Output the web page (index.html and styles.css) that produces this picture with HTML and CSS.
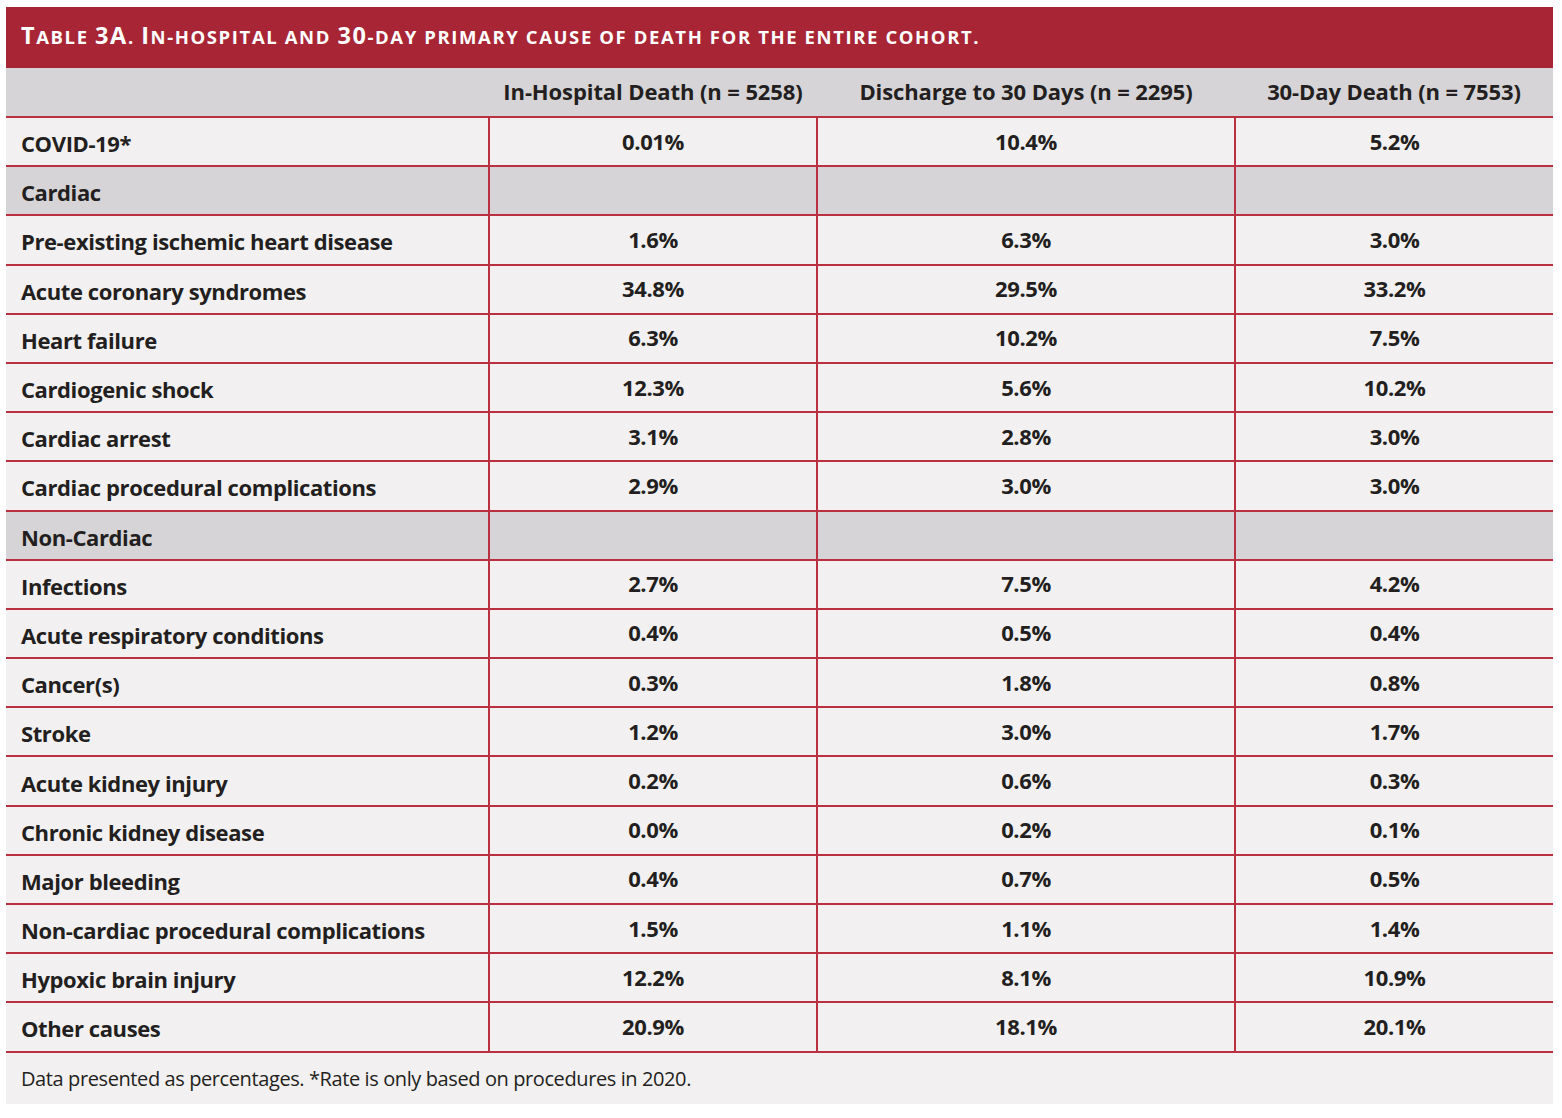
FILE: index.html
```html
<!DOCTYPE html>
<html lang="en">
<head>
<meta charset="utf-8">
<title>Table 3A</title>
<link rel="stylesheet" href="styles.css">
</head>
<body>
<div class="figure">
  <div class="title"><span class="big">T</span>able <span class="big">3A</span>. <span class="big">I</span>n-hospital and <span class="big">30</span>-day primary cause of death for the entire cohort.</div>
  <table class="data">
    <colgroup>
      <col class="c-label">
      <col class="c-a">
      <col class="c-b">
      <col class="c-c">
    </colgroup>
    <thead>
      <tr>
        <th></th>
        <th>In-Hospital Death (n = 5258)</th>
        <th>Discharge to 30 Days (n = 2295)</th>
        <th>30-Day Death (n = 7553)</th>
      </tr>
    </thead>
    <tbody>
      <tr><td class="label">COVID-19*</td><td>0.01%</td><td>10.4%</td><td>5.2%</td></tr>
      <tr class="section"><td class="label">Cardiac</td><td></td><td></td><td></td></tr>
      <tr><td class="label">Pre-existing ischemic heart disease</td><td>1.6%</td><td>6.3%</td><td>3.0%</td></tr>
      <tr><td class="label">Acute coronary syndromes</td><td>34.8%</td><td>29.5%</td><td>33.2%</td></tr>
      <tr><td class="label">Heart failure</td><td>6.3%</td><td>10.2%</td><td>7.5%</td></tr>
      <tr><td class="label">Cardiogenic shock</td><td>12.3%</td><td>5.6%</td><td>10.2%</td></tr>
      <tr><td class="label">Cardiac arrest</td><td>3.1%</td><td>2.8%</td><td>3.0%</td></tr>
      <tr><td class="label">Cardiac procedural complications</td><td>2.9%</td><td>3.0%</td><td>3.0%</td></tr>
      <tr class="section"><td class="label">Non-Cardiac</td><td></td><td></td><td></td></tr>
      <tr><td class="label">Infections</td><td>2.7%</td><td>7.5%</td><td>4.2%</td></tr>
      <tr><td class="label">Acute respiratory conditions</td><td>0.4%</td><td>0.5%</td><td>0.4%</td></tr>
      <tr><td class="label">Cancer(s)</td><td>0.3%</td><td>1.8%</td><td>0.8%</td></tr>
      <tr><td class="label">Stroke</td><td>1.2%</td><td>3.0%</td><td>1.7%</td></tr>
      <tr><td class="label">Acute kidney injury</td><td>0.2%</td><td>0.6%</td><td>0.3%</td></tr>
      <tr><td class="label">Chronic kidney disease</td><td>0.0%</td><td>0.2%</td><td>0.1%</td></tr>
      <tr><td class="label">Major bleeding</td><td>0.4%</td><td>0.7%</td><td>0.5%</td></tr>
      <tr><td class="label">Non-cardiac procedural complications</td><td>1.5%</td><td>1.1%</td><td>1.4%</td></tr>
      <tr><td class="label">Hypoxic brain injury</td><td>12.2%</td><td>8.1%</td><td>10.9%</td></tr>
      <tr><td class="label">Other causes</td><td>20.9%</td><td>18.1%</td><td>20.1%</td></tr>
    </tbody>
  </table>
  <div class="note">Data presented as percentages. *Rate is only based on procedures in 2020.</div>
</div>
</body>
</html>
```

FILE: styles.css
```css
html, body {
  margin: 0;
  padding: 0;
  background: #ffffff;
}

body {
  font-family: "Open Sans", "Noto Sans", sans-serif;
  color: #231f20;
}

.figure {
  width: 1547px;
  margin: 7px 0 0 6px;
  background: #f2f0f1;
}

.title {
  height: 61px;
  box-sizing: border-box;
  padding: 13px 0 0 15px;
  background: #a82535;
  color: #ffffff;
  font-weight: 700;
  font-size: 18.5px;
  text-transform: uppercase;
  letter-spacing: 1.6px;
  line-height: 30px;
  white-space: nowrap;
}

.title .big {
  font-size: 23.5px;
}

.data {
  width: 1547px;
  border-collapse: collapse;
  table-layout: fixed;
}

.c-label { width: 483px; }
.c-a { width: 328px; }
.c-b { width: 418px; }
.c-c { width: 318px; }

.data th {
  height: 46px;
  padding: 0 0 2px 0;
  background: #d6d4d7;
  font-weight: 700;
  font-size: 22px;
  letter-spacing: -0.1px;
  text-align: center;
  vertical-align: middle;
  border-bottom: 2px solid #bb3040;
}

.data tbody tr {
  height: 49.2px;
}

.data td {
  padding: 0 0 2px 0;
  font-weight: 700;
  font-size: 22px;
  letter-spacing: -0.4px;
  line-height: 28px;
  text-align: center;
  vertical-align: middle;
  border: 2px solid #bb3040;
}

.data td:first-child { border-left: none; }
.data td:last-child { border-right: none; }

.data td.label {
  text-align: left;
  padding: 3px 0 0 15px;
}

.data tr.section td {
  background: #d6d4d7;
}

.note {
  height: 51px;
  box-sizing: border-box;
  padding: 13px 0 0 15px;
  font-size: 20px;
  letter-spacing: -0.4px;
  line-height: 26px;
}
```
